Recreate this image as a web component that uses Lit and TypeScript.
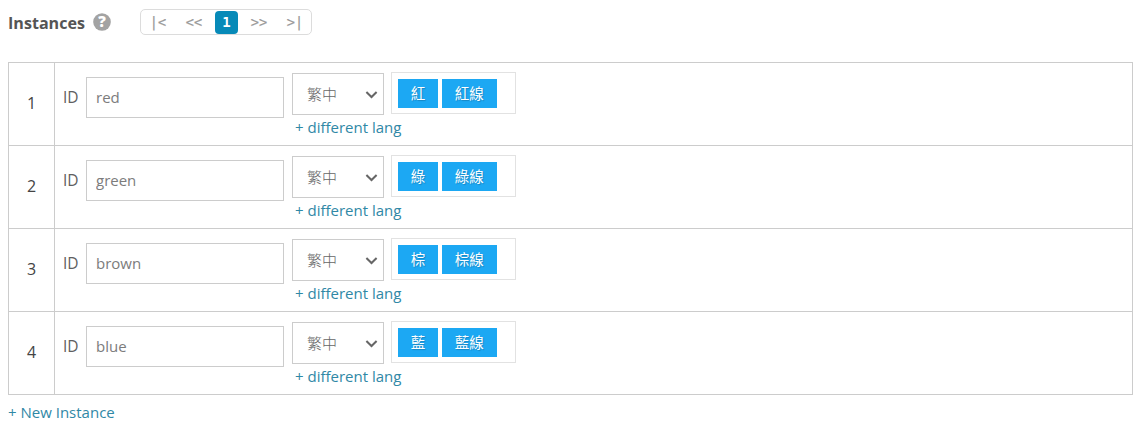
import { LitElement, html, css } from "lit";
import { customElement, property } from "lit/decorators.js";

interface Instance {
  id: string;
  labels: string[];
}

@customElement("instance-pager")
class InstancePager extends LitElement {
  static styles = css`
    :host {
      display: flex;
      gap: 6px;
      box-sizing: border-box;
      width: 172px;
      height: 26px;
      padding: 1px 1px 1px 2px;
      border: 1px solid #dcdcdc;
      border-radius: 5px;
      font: 13.5px/23px "DejaVu Sans Mono", monospace;
      color: #999;
    }
    .step {
      flex: none;
      width: 30px;
      height: 22px;
      line-height: 23px;
      text-align: center;
      white-space: pre;
      -webkit-text-stroke: 0.2px #999;
    }
    .current {
      flex: none;
      width: 23px;
      height: 23px;
      border-radius: 4px;
      background: #078ab8;
      color: #fff;
      font-weight: bold;
      font-size: 14px;
      line-height: 22px;
      text-align: center;
    }
  `;
  render() {
    return html`<span class="step">|&lt;</span
      ><span class="step">&lt;&lt;</span><span class="current">1</span
      ><span class="step">&gt;&gt;</span><span class="step">&gt;|</span>`;
  }
}

@customElement("instance-row")
class InstanceRow extends LitElement {
  @property({ type: Number }) index = 1;
  @property({ attribute: false }) item!: Instance;

  static styles = css`
    :host {
      display: flex;
      box-sizing: border-box;
      height: 83px;
      border-bottom: 1px solid #ccc;
    }
    .index {
      box-sizing: border-box;
      width: 46px;
      border-right: 1px solid #ccc;
      line-height: 80px;
      text-align: center;
      font-size: 16px;
      color: #444;
    }
    .fields {
      display: flex;
      align-items: flex-start;
      padding: 9px 0 0 8px;
    }
    .label {
      width: 23px;
      padding-top: 15px;
      line-height: 20px;
      font-size: 15.5px;
      color: #606060;
    }
    .field {
      box-sizing: border-box;
      width: 198px;
      height: 41px;
      margin: 5px 8px 0 0;
      padding: 0 9px 2px;
      border: 1px solid #ccc;
      border-radius: 0;
      background: #fff;
      font: inherit;
      color: #7c7c7c;
      outline: none;
    }
    .lang {
      width: 99px;
    }
    .select {
      display: flex;
      box-sizing: border-box;
      align-items: center;
      justify-content: space-between;
      width: 92px;
      height: 42px;
      margin-top: 1px;
      padding: 0 5px 0 14px;
      border: 1px solid #ccc;
      font-weight: 300;
      color: #666;
    }
    .more {
      display: block;
      padding-left: 3px;
      margin-top: 2px;
      line-height: 20px;
      color: #3088a6;
      white-space: nowrap;
      text-decoration: none;
    }
    .tags {
      display: flex;
      box-sizing: border-box;
      gap: 4px;
      width: 125px;
      height: 42px;
      padding: 6px;
      border: 1px solid #e2e2e2;
    }
    .tag {
      height: 29px;
      padding: 0 12.75px;
      background: #1ca8f3;
      line-height: 30px;
      font-size: 14.5px;
      color: #fff;
      text-shadow: 1px 1px 1px rgba(0, 0, 0, 0.2);
    }
  `;
  render() {
    return html`
      <div class="index">${this.index}</div>
      <div class="fields">
        <span class="label">ID</span>
        <input class="field" .value=${this.item.id} />
        <div class="lang">
          <div class="select">
            <span>繁中</span>
            <svg width="13" height="9" viewBox="0 0 13 9" fill="none" stroke="#666" stroke-width="2">
              <path d="M1.4 2 6.5 7 11.6 2" />
            </svg>
          </div>
          <a class="more">+ different lang</a>
        </div>
        <div class="tags">
          ${this.item.labels.map((t) => html`<span class="tag">${t}</span>`)}
        </div>
      </div>
    `;
  }
}

@customElement("app-root")
class AppRoot extends LitElement {
  private items: Instance[] = [
    { id: "red", labels: ["紅", "紅線"] },
    { id: "green", labels: ["綠", "綠線"] },
    { id: "brown", labels: ["棕", "棕線"] },
    { id: "blue", labels: ["藍", "藍線"] },
  ];

  static styles = css`
    :host {
      display: block;
      box-sizing: border-box;
      height: 431px;
      padding: 9px 3px 0 8px;
      background: #fff;
      font: 15px/20px "Open Sans", "Noto Sans CJK TC", sans-serif;
      color: #444;
      overflow: hidden;
    }
    .header {
      display: flex;
      height: 53px;
    }
    .title {
      width: 85px;
      padding-top: 4px;
      font-weight: 700;
      font-size: 16.1px;
      color: #555;
    }
    .help {
      width: 18px;
      height: 18px;
      margin: 4px 29px 0 0;
      overflow: visible;
    }
    .mark {
      font: 800 15px "Open Sans", sans-serif;
    }
    .table {
      border: 1px solid #ccc;
      border-bottom: 0;
    }
    .add {
      display: block;
      margin-top: 7px;
      color: #3088a6;
    }
  `;
  render() {
    return html`
      <div class="header">
        <span class="title">Instances</span>
        <svg class="help" viewBox="0 0 18 18">
          <circle cx="9" cy="9" r="8.8" fill="#a3a3a3" />
          <text class="mark" x="9" y="14.3" text-anchor="middle" fill="#fff">?</text>
        </svg>
        <instance-pager></instance-pager>
      </div>
      <div class="table">
        ${this.items.map(
          (item, i) => html`<instance-row .index=${i + 1} .item=${item}></instance-row>`,
        )}
      </div>
      <a class="add">+ New Instance</a>
    `;
  }
}
